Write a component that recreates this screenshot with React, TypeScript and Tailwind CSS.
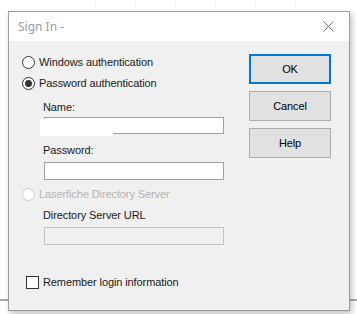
import React from "react";

function Radio({ checked, disabled }: { checked?: boolean; disabled?: boolean }) {
  return (
    <span
      className={`flex h-[13px] w-[13px] items-center justify-center rounded-full border bg-white ${
        disabled ? "border-[#cccccc]" : "border-[#333333]"
      }`}
    >
      {checked && <span className="h-[7px] w-[7px] rounded-full bg-[#333333]" />}
    </span>
  );
}

function Button({ label, primary }: { label: string; primary?: boolean }) {
  return (
    <div
      className={`flex h-[30px] w-[82px] items-center justify-center bg-[#e1e1e1] text-black ${
        primary ? "border-2 border-[#0078d7]" : "border border-[#adadad]"
      }`}
    >
      {label}
    </div>
  );
}

export default function App() {
  const ticks = [95, 135, 175, 215, 255, 295];

  return (
    <div
      className="relative h-[314px] w-[357px] overflow-hidden bg-white"
      style={{ fontFamily: '"Liberation Sans", Arial, sans-serif' }}
    >
      {/* table behind the dialog */}
      {ticks.map((x) => (
        <div key={x} className="absolute top-0 h-[8px] w-px bg-[#f2f2f2]" style={{ left: x }} />
      ))}
      <div className="absolute left-0 right-0 top-[299px] h-[2px] bg-[#a8a8a8]" />

      {/* dialog window */}
      <div className="absolute left-[8px] top-[11px] flex h-[300px] w-[342px] flex-col border border-[#9c9c9c] bg-[#f0f0f0] shadow-[2px_3px_6px_rgba(0,0,0,0.25)]">
        <div className="flex h-[29px] items-center justify-between bg-white pl-[9px] pr-[10px]">
          <span
            className="text-[12px] text-[#9a9a9a]"
            style={{ fontFamily: '"Noto Sans", "Open Sans", sans-serif' }}
          >
            Sign In -
          </span>
          <svg width="11" height="11" viewBox="0 0 11 11" className="mr-[5px]">
            <path d="M0.5 0.5 L10.5 10.5 M10.5 0.5 L0.5 10.5" stroke="#6a6a6a" strokeWidth="1" />
          </svg>
        </div>

        <div className="flex flex-1 pl-[13px] text-[11px] tracking-[-0.1px] text-[#1a1a1a]">
          <div className="flex w-[227px] flex-col pt-[11px]">
            <div className="flex h-[20px] items-center gap-[4px]">
              <Radio />
              <span>Windows authentication</span>
            </div>
            <div className="mt-px flex h-[20px] items-center gap-[4px]">
              <Radio checked />
              <span>Password authentication</span>
            </div>

            <div className="ml-[21px] mt-[6px] h-[16px] leading-[16px]">Name:</div>
            <div className="relative ml-[22px] mt-[2px] h-[17px] w-[180px] border border-[#a0a0a0] bg-white">
              <div className="absolute left-[-5px] top-[1px] h-[17px] w-[73px] bg-white" />
            </div>

            <div className="ml-[21px] mt-[8px] h-[16px] leading-[16px]">Password:</div>
            <div className="ml-[22px] mt-[4px] h-[18px] w-[180px] border border-[#a0a0a0] bg-white" />

            <div className="mt-[4px] flex h-[20px] items-center gap-[4px] text-[#b4b4b4]">
              <Radio disabled />
              <span>Laserfiche Directory Server</span>
            </div>

            <div className="ml-[21px] mt-[3px] h-[16px] leading-[16px]">Directory Server URL</div>
            <div className="ml-[22px] mt-[4px] h-[18px] w-[180px] border border-[#c4c4c4] bg-[#f0f0f0]" />

            <div className="ml-[4px] mt-[29px] flex h-[16px] items-center gap-[4px]">
              <span className="h-[13px] w-[13px] border border-[#333333] bg-white" />
              <span>Remember login information</span>
            </div>
          </div>

          <div className="flex flex-col gap-[7px] pt-[13px]">
            <Button label="OK" primary />
            <Button label="Cancel" />
            <Button label="Help" />
          </div>
        </div>
      </div>
    </div>
  );
}
